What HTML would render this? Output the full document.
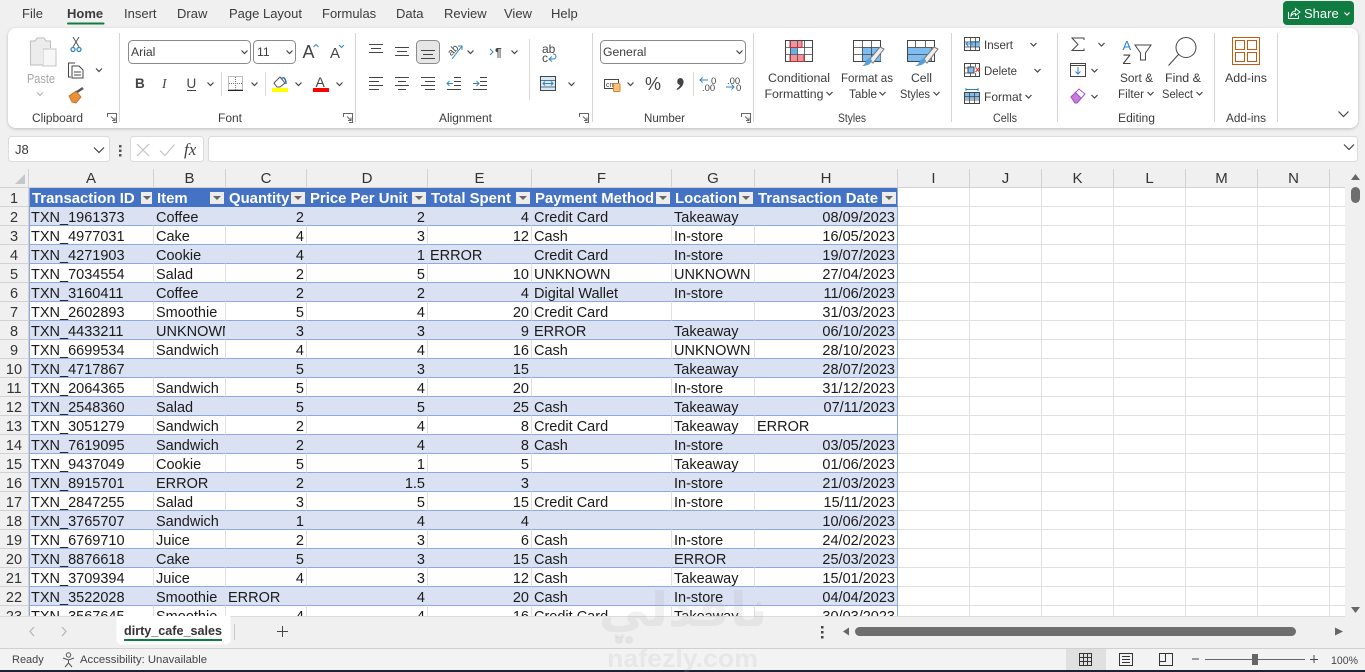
<!DOCTYPE html>
<html><head><meta charset="utf-8"><title>dirty_cafe_sales</title>
<style>
html,body{margin:0;padding:0;width:1365px;height:672px;overflow:hidden;background:#f0f0f0;font-family:"Liberation Sans",Arial,sans-serif}
.abs{position:absolute}
#top{position:absolute;left:0;top:0;z-index:3}
#top text{font-family:"Liberation Sans",Arial,sans-serif;fill:#3b3b3b;font-size:12.2px}
#wrap{position:absolute;left:0;top:169px;width:898px;height:447px;overflow:hidden}
table{border-collapse:separate;border-spacing:0;table-layout:fixed;width:898px;font-size:14.5px;color:#1a1a1a}
th,td{box-sizing:border-box;height:19px;padding:4px 0 0 0;line-height:14px;white-space:nowrap;overflow:hidden;font-weight:400;vertical-align:top}
th{background:#f0f0f0;color:#333;text-align:center;border-right:1px solid #d2d2d2;border-bottom:1px solid #d2d2d2}
tr:first-child th{font-size:15px;padding-top:2px;line-height:16px}
td{padding:4px 2px 0 2px;border-right:1px solid #e0e0e0;border-bottom:1px solid #8ea9db;background:#fff}
tr:nth-child(odd) td{background:#d9e1f2;border-right-color:#d9e1f2}
td:nth-child(4),td:nth-child(5),td:nth-child(6),td:nth-child(9){text-align:right}
td:nth-child(9){border-right-color:#8ea9db!important}
td:nth-child(2){border-left:1px solid #8ea9db;padding-left:1px}
td.l{text-align:left!important}
tr.h td{background:#4472c4!important;color:#fff;font-weight:700;font-size:14.9px;border-right-color:#4472c4;border-bottom-color:#4472c4;position:relative;padding-left:3px;text-align:left!important}
tr.h td:nth-child(2){padding-left:2px}
tr.h td i{position:absolute;right:1px;top:4px;width:14px;height:12px;background:#ececec}
tr.h td:nth-child(2) i{width:11px}
tr.h td i:after{content:"";position:absolute;left:3px;top:4px;border:4px solid transparent;border-top:4px solid #666;border-bottom:0}
tr.h td:nth-child(2) i:after{left:2px}
#rg{position:absolute;left:898px;top:188px;width:447px;height:428px;background-color:#fff;
background-image:linear-gradient(to right,transparent 71px,#e0e0e0 71px,#e0e0e0 72px),linear-gradient(to bottom,transparent 18px,#e0e0e0 18px,#e0e0e0 19px);background-size:72px 100%,100% 19px}
.ch{position:absolute;top:169px;height:19px;box-sizing:border-box;width:72px;background:#f0f0f0;border-right:1px solid #d2d2d2;border-bottom:1px solid #d2d2d2;text-align:center;font-size:15px;padding-top:2px;line-height:16px;color:#333}
#vs{position:absolute;left:1345px;top:169px;width:20px;height:447px;background:#f0f0f0}
#bot{position:absolute;left:0;top:616px;z-index:3}
#bot text{font-family:"Liberation Sans",Arial,sans-serif;fill:#444}
#wm{position:absolute;left:560px;top:590px;z-index:4;pointer-events:none}
</style></head><body>
<svg id="top" width="1365" height="169" viewBox="0 0 1365 169" xmlns="http://www.w3.org/2000/svg">
<defs>
<path id="c" d="M-3-1.5L0 1.5L3-1.5" fill="none" stroke="#444" stroke-width="1.2"/>
<path id="C" d="M-5-2.5L0 2.5L5-2.5" fill="none" stroke="#444" stroke-width="1.2"/>
<path id="dl" d="M-4.500-1V-4.500H4.500V4.500H1M-1-1.500L3 2.500M3-.5V2.500H0" fill="none" stroke="#666" stroke-width="1"/>
<filter id="sh" x="-2%" y="-10%" width="104%" height="125%"><feDropShadow dx="0" dy="1" stdDeviation="1.600" flood-color="#000" flood-opacity=".22"/></filter>
</defs>
<rect width="1365" height="169" fill="#f0f0f0"/>
<text x="22" y="18" style="font-size:13px">File</text>
<text x="67" y="18" style="font-weight:700;font-size:13px">Home</text>
<rect x="67" y="22.500" width="37.500" height="2" rx="1" fill="#107c41"/>
<text x="124" y="18" style="font-size:13px">Insert</text>
<text x="177" y="18" style="font-size:13px">Draw</text>
<text x="229" y="18" style="font-size:13px">Page Layout</text>
<text x="322" y="18" style="font-size:13px">Formulas</text>
<text x="396" y="18" style="font-size:13px">Data</text>
<text x="444" y="18" style="font-size:13px">Review</text>
<text x="504" y="18" style="font-size:13px">View</text>
<text x="551" y="18" style="font-size:13px">Help</text>
<rect x="1283" y="1" width="71" height="24" rx="4" fill="#107c41"/>
<path d="M1288.500 12V18.500H1298.500V15.500M1291 16C1291 12.500 1293.500 11 1295.500 11V8.500L1300 12L1295.500 15.500V13.500C1293.500 13.500 1292 14.500 1291 16Z" fill="none" stroke="#fff" stroke-width=".9"/>
<text x="1304" y="18" style="font-size:13px;fill:#fff">Share</text>
<path d="M1344.500 12.500L1347 15L1349.500 12.500" stroke="#fff" fill="none" stroke-width="1.200"/>

<rect x="8" y="28" width="1350" height="100" rx="8" fill="#fff" filter="url(#sh)"/>
<g stroke="#d4d4d4" stroke-width="1"><path d="M119.500 33V122M355.500 33V122M592.500 33V122M753.500 33V122M951.500 33V122M1057.500 33V122M1214.500 33V122M1277.500 33V122"/><path d="M529.500 39V100M221.500 72V96M265.500 72V96M693.500 72V96" stroke="#d8d8d8"/></g>

<!-- Clipboard -->
<path d="M30.500 64V41H35L37 38H44L46 41H50.500V48" fill="#ececec" stroke="#bdbdbd"/>
<rect x="43" y="49" width="13" height="17" fill="#f7f7f7" stroke="#c4c4c4"/>
<rect x="30.500" y="49" width="12.500" height="15.500" fill="#ececec"/>
<path d="M30.500 41V65H43" fill="none" stroke="#bdbdbd"/>
<text x="27" y="83" textLength="28" lengthAdjust="spacingAndGlyphs" style="font-size:12.500px;fill:#a6a6a6">Paste</text>
<use href="#c" x="40" y="94" opacity=".4"/>
<path d="M73 37L79 47M79 37L73 47" stroke="#555" fill="none"/><circle cx="73" cy="49.500" r="2" fill="none" stroke="#2e86c8" stroke-width="1.300"/><circle cx="79" cy="49.500" r="2" fill="none" stroke="#2e86c8" stroke-width="1.300"/>
<path d="M71 77H68.500V63H75M72 66H79L83 70V78H72Z" fill="#fff" stroke="#444"/><path d="M74 72H81M74 75H81" stroke="#444"/>
<use href="#c" x="99" y="70"/>
<path d="M69 96L76 91L81 97L76 103L72 102Z" fill="#e8913c" stroke="#c46a1c" stroke-width=".8"/><path d="M77 92L83 88" stroke="#555" stroke-width="2.500"/>
<text x="32" y="122" textLength="51" lengthAdjust="spacingAndGlyphs">Clipboard</text><use href="#dl" x="112" y="118"/>

<!-- Font -->
<rect x="128.500" y="40.500" width="122" height="23" rx="4" fill="#fff" stroke="#8a8a8a"/>
<text x="131" y="56">Arial</text><use href="#c" x="244.500" y="52"/>
<rect x="253.500" y="40.500" width="42" height="23" rx="4" fill="#fff" stroke="#8a8a8a"/>
<text x="257" y="56">11</text><use href="#c" x="289.500" y="52"/>
<text x="302.500" y="58" style="font-size:18px;fill:#444">A</text><path d="M313.500 47L316 44.500L318.500 47" stroke="#2e86c8" fill="none"/>
<text x="330" y="58" style="font-size:15px;fill:#444">A</text><path d="M339 45L341.500 47.500L344 45" stroke="#2e86c8" fill="none"/>
<text x="135" y="88" style="font-weight:700;font-size:13.500px;fill:#444">B</text>
<text x="162" y="88" style="font-style:italic;font-size:13.500px;font-family:'Liberation Serif';fill:#444">I</text>
<text x="186.500" y="88" style="font-size:13.500px;fill:#444">U</text><path d="M187 90.500H196" stroke="#444"/>
<use href="#c" x="210.500" y="84"/>
<rect x="228.500" y="76.500" width="14" height="13" fill="none" stroke="#777" stroke-dasharray="1 1"/><path d="M235.500 77V90M229 83.500H242" stroke="#777" stroke-dasharray="1 1"/><path d="M228 90.500H243" stroke="#222"/>
<use href="#c" x="254.500" y="84"/>
<path d="M274 83L280 77L285 83L280 87H277Z" fill="#fff" stroke="#555"/><path d="M281 79C284 76 286 79 286 84" stroke="#2e74b5" fill="none" stroke-width="1.500"/>
<rect x="272" y="88" width="16" height="4" fill="#ffff00"/>
<use href="#c" x="298.500" y="84"/>
<text x="315.500" y="87" style="font-size:14px;fill:#444">A</text><rect x="313" y="88" width="16" height="4" fill="#ff0000"/>
<use href="#c" x="339.500" y="84"/>
<text x="218" y="122" textLength="24" lengthAdjust="spacingAndGlyphs">Font</text><use href="#dl" x="348" y="118"/>

<!-- Alignment -->
<g stroke="#444" stroke-width="1" fill="none">
<path d="M369 44.500H383M371 48.500H381M369 52.500H383"/>
<path d="M395 47.500H409M397 51.500H407M395 55.500H409"/>
</g>
<rect x="416.500" y="40.500" width="23" height="23" rx="4" fill="#e6e6e6" stroke="#8a8a8a"/>
<path d="M421 50.500H435M423 54.500H433M421 58.500H435" stroke="#444"/>
<g stroke="#444" fill="none"><path d="M369 77.500H383M369 81.500H379M369 85.500H383M369 89.500H379"/><path d="M395 77.500H409M398 81.500H406M395 85.500H409M398 89.500H406"/><path d="M421 77.500H435M425 81.500H435M421 85.500H435M425 89.500H435"/>
<path d="M454 77.500H461M454 81.500H461M454 85.500H461M447 89.500H461"/><path d="M480 77.500H487M480 81.500H487M480 85.500H487M473 89.500H487"/></g>
<path d="M447 83.500H453M449.500 81L447 83.500L449.500 86" stroke="#2e86c8" fill="none"/><path d="M473 83.500H479M476.500 81L479 83.500L476.500 86" stroke="#2e86c8" fill="none"/>
<text x="447" y="54" transform="rotate(-45 452 50)" style="font-size:10px;fill:#444">ab</text><path d="M452 59L462 46M458 46H462V50" stroke="#2e86c8" fill="none"/>
<use href="#c" x="470.500" y="52"/>
<path d="M490 49L493 52L490 55" stroke="#2e86c8" fill="none"/><text x="495" y="56.500" style="font-size:12px;font-weight:700;fill:#444">¶</text>
<use href="#c" x="514.500" y="52"/>
<text x="542" y="53" style="font-size:12px;fill:#444">ab</text><text x="542" y="62" style="font-size:12px;fill:#444">c</text><path d="M549 59H553C557 59 557 54 553 54M552 56.500L549 59L552 61.500" stroke="#2e86c8" fill="none"/>
<rect x="540.500" y="76.500" width="15" height="14" fill="#d6ebf7" stroke="#444"/><path d="M540 80.500H556M540 87H556" stroke="#444" stroke-width=".7"/><path d="M543 83.500H553M545 81.500L543 83.500L545 85.500M551 81.500L553 83.500L551 85.500" stroke="#2e86c8" fill="none"/>
<use href="#c" x="571.500" y="84"/>
<text x="439" y="122" textLength="53" lengthAdjust="spacingAndGlyphs">Alignment</text><use href="#dl" x="584" y="118"/>

<!-- Number -->
<rect x="600.500" y="40.500" width="145" height="23" rx="4" fill="#fff" stroke="#8a8a8a"/>
<text x="603" y="56">General</text><use href="#c" x="739.500" y="52"/>
<rect x="604.500" y="79.500" width="14" height="9" fill="#fff" stroke="#444"/><text x="606" y="87" style="font-size:7px;fill:#444">cm</text>
<rect x="613.500" y="83.500" width="6.500" height="8" rx="1" fill="#f7c27b" stroke="#d9822b"/>
<use href="#c" x="630.500" y="84"/>
<text x="645" y="90" style="font-size:18px;fill:#444">%</text>
<path d="M680 78A3.600 3.600 0 0 1 683.600 81.600C683.600 85.500 680.500 88.500 677 90L676.500 89C678.500 87.500 679.800 86 680 85A3.600 3.600 0 0 1 680 78Z" fill="#444"/>
<path d="M700 80H708M702.500 77.500L700 80L702.500 82.500" stroke="#2e86c8" fill="none"/><text x="711" y="84" style="font-size:9.500px;fill:#444">0</text><text x="702" y="91" style="font-size:9.500px;fill:#444">.00</text>
<text x="727" y="84" style="font-size:9.500px;fill:#444">.00</text><path d="M726 87H734M731.500 84.500L734 87L731.500 89.500" stroke="#2e86c8" fill="none"/><text x="736" y="91" style="font-size:9.500px;fill:#444">0</text>
<text x="644" y="122" textLength="41" lengthAdjust="spacingAndGlyphs">Number</text><use href="#dl" x="746" y="118"/>

<!-- Styles -->
<g>
<rect x="785.500" y="40.500" width="27" height="21" fill="#fff" stroke="#444"/>
<rect x="790" y="41" width="12" height="6.500" fill="#f4929b"/><rect x="790" y="48" width="7" height="6.500" fill="#6aaee8"/><rect x="790" y="55" width="14" height="6.500" fill="#f4929b"/>
<path d="M785 47.500H813M785 54.500H813M790.500 40V62M797.500 40V62M804.500 40V62" stroke="#444" stroke-width=".8" fill="none"/>
<path d="M790 41V47.500H802V41M790 55V61.500H804V55" stroke="#c0303a" fill="none"/>
</g>
<text x="768" y="82" textLength="62" lengthAdjust="spacingAndGlyphs">Conditional</text><text x="764.500" y="98" textLength="59" lengthAdjust="spacingAndGlyphs">Formatting</text><use href="#c" x="829.500" y="93.500"/>
<g>
<rect x="853.500" y="40.500" width="27" height="21" fill="#fff" stroke="#444"/>
<rect x="862" y="47" width="18.500" height="14" fill="#7fbdf0"/>
<path d="M853 47.500H881M853 54.500H881M862.500 40V62M871.500 40V62" stroke="#444" stroke-width=".8" fill="none"/>
<path d="M869 60L880 47L884 49L873 63Z" fill="#eee" stroke="#777"/><path d="M862 66C866 66 871 65 872 60L869 58C865 60 866 64 862 66Z" fill="#5a9fd4"/>
</g>
<text x="841" y="82" textLength="52" lengthAdjust="spacingAndGlyphs">Format as</text><text x="849" y="98" textLength="28" lengthAdjust="spacingAndGlyphs">Table</text><use href="#c" x="882.500" y="93.500"/>
<g>
<rect x="907.500" y="40.500" width="27" height="21" fill="#fff" stroke="#444"/>
<rect x="908" y="47" width="23" height="14" fill="#7fbdf0"/>
<path d="M907 47.500H935M907 54.500H935M915.500 40V47M925.500 40V47M931.500 47V62" stroke="#444" stroke-width=".8" fill="none"/>
<path d="M923 60L934 47L938 49L927 63Z" fill="#eee" stroke="#777"/><path d="M915 66C919 66 925 65 926 60L923 58C919 60 920 64 915 66Z" fill="#5a9fd4"/>
</g>
<text x="911" y="82">Cell</text><text x="900" y="98" textLength="30" lengthAdjust="spacingAndGlyphs">Styles</text><use href="#c" x="936.500" y="93.500"/>
<text x="838" y="122" textLength="28" lengthAdjust="spacingAndGlyphs">Styles</text>

<!-- Cells -->
<g fill="none" stroke="#444">
<rect x="964.500" y="37.500" width="15" height="13" fill="#fff"/><rect x="971" y="41" width="9" height="6" fill="#7fbdf0" stroke="none"/><path d="M964 42H980M964 47H980M970.500 37V51M975.500 37V51" stroke-width=".8"/>
<rect x="964.500" y="63.500" width="15" height="13" fill="#fff"/><rect x="968" y="67" width="6" height="6" fill="#7fbdf0"/><path d="M964 68H968M964 73H968M970.500 63V67M970.500 73V77M975.500 63V67M975.500 73V77" stroke-width=".8"/>
<rect x="964.500" y="92.500" width="15" height="11" fill="#fff"/><rect x="965" y="93" width="14" height="6" fill="#7fbdf0" stroke="none"/><path d="M964 96.500H980M964 100H980M969.500 92V104M974.500 92V104" stroke-width=".8"/>
</g>
<path d="M966 44H973M968.500 41.500L966 44L968.500 46.500" stroke="#2e86c8" fill="none"/>
<path d="M975.500 67.500L979.500 72M979.500 67.500L975.500 72" stroke="#e0463c" fill="none" stroke-width="1.200"/>
<path d="M966 89.500H978M966 88V91M978 88V91" stroke="#2e86c8" fill="none"/>
<text x="984" y="49" textLength="29" lengthAdjust="spacingAndGlyphs">Insert</text><use href="#c" x="1033.500" y="44.500"/>
<text x="984" y="75" textLength="33" lengthAdjust="spacingAndGlyphs">Delete</text><use href="#c" x="1037.500" y="70.500"/>
<text x="984" y="101" textLength="38" lengthAdjust="spacingAndGlyphs">Format</text><use href="#c" x="1028.500" y="96.500"/>
<text x="993" y="122" textLength="24" lengthAdjust="spacingAndGlyphs">Cells</text>

<!-- Editing -->
<path d="M1084 40V38H1072L1078 44.500L1072 50.500H1084V48.500" fill="none" stroke="#444"/>
<use href="#c" x="1101.500" y="44.500"/>
<rect x="1070.500" y="63.500" width="15" height="13" fill="#fff" stroke="#444"/><path d="M1071 65.500H1085" stroke="#444"/><path d="M1078 67V74M1075.500 71.500L1078 74L1080.500 71.500" stroke="#2e86c8" fill="none"/>
<use href="#c" x="1094.500" y="70.500"/>
<path d="M1071 97L1079 89L1085 94L1077 103H1075Z" fill="#fff" stroke="#a44fc4"/><path d="M1071 97L1075.500 92.500L1081 98L1077 103H1075Z" fill="#c77ddb" stroke="#a44fc4"/>
<use href="#c" x="1094.500" y="96.500"/>
<text x="1122.500" y="50" style="font-size:13px;fill:#2e86c8">A</text><text x="1122.500" y="64" style="font-size:14px;fill:#444">Z</text>
<path d="M1135 45H1151L1145.500 53V60H1140.500V53Z" fill="#fff" stroke="#444"/>
<text x="1120" y="82" textLength="33" lengthAdjust="spacingAndGlyphs">Sort &amp;</text><text x="1118" y="98" textLength="26" lengthAdjust="spacingAndGlyphs">Filter</text><use href="#c" x="1150.500" y="93.500"/>
<circle cx="1186" cy="47.500" r="10" fill="#fff" stroke="#444"/><path d="M1178.500 54.500L1168.500 65.500" stroke="#444" fill="none"/>
<text x="1165" y="82" textLength="36" lengthAdjust="spacingAndGlyphs">Find &amp;</text><text x="1162" y="98" textLength="31" lengthAdjust="spacingAndGlyphs">Select</text><use href="#c" x="1199.500" y="93.500"/>
<text x="1118" y="122" textLength="37" lengthAdjust="spacingAndGlyphs">Editing</text>

<!-- Add-ins -->
<rect x="1232.500" y="37.500" width="27" height="27" fill="#fff" stroke="#c55a11"/>
<rect x="1235.500" y="40.500" width="9" height="9" fill="none" stroke="#c55a11"/><rect x="1247.500" y="40.500" width="9" height="9" fill="none" stroke="#c55a11"/><rect x="1235.500" y="52.500" width="9" height="9" fill="none" stroke="#c55a11"/><rect x="1247.500" y="52.500" width="9" height="9" fill="none" stroke="#c55a11"/>
<text x="1225" y="82" textLength="42" lengthAdjust="spacingAndGlyphs">Add-ins</text>
<text x="1226" y="122" textLength="40" lengthAdjust="spacingAndGlyphs">Add-ins</text>
<use href="#C" x="1343.500" y="114"/>

<!-- Formula bar -->
<rect x="8.500" y="136.500" width="101" height="25" rx="3" fill="#fff" stroke="#dcdcdc"/>
<text x="15" y="154" style="font-size:13px">J8</text><use href="#C" x="99" y="150"/>
<g fill="#555"><rect x="119" y="145" width="2.500" height="2.500"/><rect x="119" y="149.500" width="2.500" height="2.500"/><rect x="119" y="154" width="2.500" height="2.500"/></g>
<rect x="130.500" y="136.500" width="73" height="25" rx="3" fill="#fff" stroke="#dcdcdc"/>
<path d="M137 144L149 156M149 144L137 156" stroke="#c4c4c4" fill="none" stroke-width="1.200"/>
<path d="M160 150.500L165 155.500L174.500 144.500" stroke="#c4c4c4" fill="none" stroke-width="1.200"/>
<text x="184" y="155" style="font-family:'Liberation Serif';font-style:italic;font-size:17px;fill:#444">fx</text>
<rect x="208.500" y="136.500" width="1149" height="25" rx="3" fill="#fff" stroke="#dcdcdc"/>
<use href="#C" x="1349" y="147"/>
</svg>

<div id="rg"></div>
<div class="ch" style="left:898px">I</div><div class="ch" style="left:970px">J</div><div class="ch" style="left:1042px">K</div><div class="ch" style="left:1114px">L</div><div class="ch" style="left:1186px">M</div><div class="ch" style="left:1258px">N</div><div class="ch" style="left:1330px;width:15px;border-right:0"></div>

<div id="wrap"><table>
<colgroup><col style="width:29px"><col style="width:125px"><col style="width:72px"><col style="width:81px"><col style="width:121px"><col style="width:104px"><col style="width:140px"><col style="width:83px"><col style="width:143px"></colgroup>
<tr><th></th><th>A</th><th>B</th><th>C</th><th>D</th><th>E</th><th>F</th><th>G</th><th>H</th></tr>
<tr class="h"><th>1</th><td>Transaction ID<i></i></td><td>Item<i></i></td><td>Quantity<i></i></td><td>Price Per Unit<i></i></td><td>Total Spent<i></i></td><td>Payment Method<i></i></td><td>Location<i></i></td><td>Transaction Date<i></i></td></tr>
<tr><th>2</th><td>TXN_1961373</td><td>Coffee</td><td>2</td><td>2</td><td>4</td><td>Credit Card</td><td>Takeaway</td><td>08/09/2023</td></tr>
<tr><th>3</th><td>TXN_4977031</td><td>Cake</td><td>4</td><td>3</td><td>12</td><td>Cash</td><td>In-store</td><td>16/05/2023</td></tr>
<tr><th>4</th><td>TXN_4271903</td><td>Cookie</td><td>4</td><td>1</td><td class="l">ERROR</td><td>Credit Card</td><td>In-store</td><td>19/07/2023</td></tr>
<tr><th>5</th><td>TXN_7034554</td><td>Salad</td><td>2</td><td>5</td><td>10</td><td>UNKNOWN</td><td>UNKNOWN</td><td>27/04/2023</td></tr>
<tr><th>6</th><td>TXN_3160411</td><td>Coffee</td><td>2</td><td>2</td><td>4</td><td>Digital Wallet</td><td>In-store</td><td>11/06/2023</td></tr>
<tr><th>7</th><td>TXN_2602893</td><td>Smoothie</td><td>5</td><td>4</td><td>20</td><td>Credit Card</td><td></td><td>31/03/2023</td></tr>
<tr><th>8</th><td>TXN_4433211</td><td>UNKNOWN</td><td>3</td><td>3</td><td>9</td><td>ERROR</td><td>Takeaway</td><td>06/10/2023</td></tr>
<tr><th>9</th><td>TXN_6699534</td><td>Sandwich</td><td>4</td><td>4</td><td>16</td><td>Cash</td><td>UNKNOWN</td><td>28/10/2023</td></tr>
<tr><th>10</th><td>TXN_4717867</td><td></td><td>5</td><td>3</td><td>15</td><td></td><td>Takeaway</td><td>28/07/2023</td></tr>
<tr><th>11</th><td>TXN_2064365</td><td>Sandwich</td><td>5</td><td>4</td><td>20</td><td></td><td>In-store</td><td>31/12/2023</td></tr>
<tr><th>12</th><td>TXN_2548360</td><td>Salad</td><td>5</td><td>5</td><td>25</td><td>Cash</td><td>Takeaway</td><td>07/11/2023</td></tr>
<tr><th>13</th><td>TXN_3051279</td><td>Sandwich</td><td>2</td><td>4</td><td>8</td><td>Credit Card</td><td>Takeaway</td><td class="l">ERROR</td></tr>
<tr><th>14</th><td>TXN_7619095</td><td>Sandwich</td><td>2</td><td>4</td><td>8</td><td>Cash</td><td>In-store</td><td>03/05/2023</td></tr>
<tr><th>15</th><td>TXN_9437049</td><td>Cookie</td><td>5</td><td>1</td><td>5</td><td></td><td>Takeaway</td><td>01/06/2023</td></tr>
<tr><th>16</th><td>TXN_8915701</td><td>ERROR</td><td>2</td><td>1.5</td><td>3</td><td></td><td>In-store</td><td>21/03/2023</td></tr>
<tr><th>17</th><td>TXN_2847255</td><td>Salad</td><td>3</td><td>5</td><td>15</td><td>Credit Card</td><td>In-store</td><td>15/11/2023</td></tr>
<tr><th>18</th><td>TXN_3765707</td><td>Sandwich</td><td>1</td><td>4</td><td>4</td><td></td><td></td><td>10/06/2023</td></tr>
<tr><th>19</th><td>TXN_6769710</td><td>Juice</td><td>2</td><td>3</td><td>6</td><td>Cash</td><td>In-store</td><td>24/02/2023</td></tr>
<tr><th>20</th><td>TXN_8876618</td><td>Cake</td><td>5</td><td>3</td><td>15</td><td>Cash</td><td>ERROR</td><td>25/03/2023</td></tr>
<tr><th>21</th><td>TXN_3709394</td><td>Juice</td><td>4</td><td>3</td><td>12</td><td>Cash</td><td>Takeaway</td><td>15/01/2023</td></tr>
<tr><th>22</th><td>TXN_3522028</td><td>Smoothie</td><td class="l">ERROR</td><td>4</td><td>20</td><td>Cash</td><td>In-store</td><td>04/04/2023</td></tr>
<tr><th>23</th><td>TXN_3567645</td><td>Smoothie</td><td>4</td><td>4</td><td>16</td><td>Credit Card</td><td>Takeaway</td><td>30/03/2023</td></tr>
</table></div>
<svg class="abs" style="left:0;top:169px;z-index:2" width="30" height="19"><path d="M25 5V15H15Z" fill="#c6c6c6"/></svg>

<div id="vs"><svg width="20" height="447" style="display:block"><path d="M6 11L10.500 5L15 11Z" fill="#666"/><rect x="6" y="18" width="9" height="16" rx="4.500" fill="#6e6e6e"/><path d="M6 438L10.500 444L15 438Z" fill="#666"/></svg></div>

<svg id="bot" width="1365" height="56" viewBox="0 616 1365 56" xmlns="http://www.w3.org/2000/svg">
<rect x="0" y="616" width="1365" height="32" fill="#f0f0f0"/>
<rect x="0" y="648" width="1365" height="22" fill="#f3f3f3"/>
<path d="M0 648.500H1365" stroke="#d0d0d0"/><path d="M0 616.500H1345" stroke="#dcdcdc"/>
<path d="M34 627L30 631.500L34 636" fill="none" stroke="#b5b5b5" stroke-width="1.200"/><path d="M62 627L66 631.500L62 636" fill="none" stroke="#b5b5b5" stroke-width="1.200"/>
<rect x="116.500" y="612" width="114" height="32.500" rx="5" fill="#fff"/>
<text x="124" y="635" textLength="98" lengthAdjust="spacingAndGlyphs" style="font-weight:700;font-size:13px;fill:#333">dirty_cafe_sales</text>
<rect x="124" y="639" width="98" height="2" fill="#107c41"/>
<path d="M234.500 624V640" stroke="#c8c8c8"/>
<path d="M277 631.500H288M282.500 626V637" stroke="#444" fill="none"/>
<g fill="#444"><rect x="821" y="626" width="2.500" height="2.500"/><rect x="821" y="631" width="2.500" height="2.500"/><rect x="821" y="636" width="2.500" height="2.500"/></g>
<path d="M849 627.500L843 631.500L849 635.500Z" fill="#666"/>
<rect x="855" y="627" width="441" height="9" rx="4.500" fill="#6e6e6e"/>
<path d="M1335 627.500L1343 631.500L1335 635.500Z" fill="#666"/>

<text x="12" y="663" style="font-size:11px">Ready</text>
<circle cx="68.500" cy="655" r="2.200" fill="none" stroke="#555"/><path d="M63 658L68.500 660L74 658M68.500 660V663L65 667M68.500 663L72 667" fill="none" stroke="#555"/>
<text x="80" y="663" textLength="127" lengthAdjust="spacingAndGlyphs" style="font-size:11px">Accessibility: Unavailable</text>
<rect x="1066" y="649" width="40" height="21" fill="#e0e0e0"/>
<path d="M1079.500 653.500H1091.500V665.500H1079.500ZM1083.500 653.500V665.500M1087.500 653.500V665.500M1079.500 657.500H1091.500M1079.500 661.500H1091.500" fill="none" stroke="#333"/>
<rect x="1119.500" y="653.500" width="13" height="12" fill="none" stroke="#333"/><path d="M1122 656.500H1130M1122 659.500H1130M1122 662.500H1130" stroke="#333"/>
<path d="M1159.500 653.500H1172.500V665.500H1159.500ZM1159.500 661.500H1165.500V653.500" fill="none" stroke="#333"/>
<path d="M1192 659H1199" stroke="#444"/>
<path d="M1205 659.500H1305" stroke="#666"/><rect x="1252" y="654" width="6" height="11" fill="#666"/>
<path d="M1310 659.500H1318M1314 655V663" stroke="#444"/>
<text x="1331" y="664" textLength="27" lengthAdjust="spacingAndGlyphs" style="font-size:11px">100%</text>
<rect x="0" y="670" width="1365" height="2" fill="#1b2233"/>
</svg>

<svg id="wm" width="220" height="82" viewBox="560 590 220 82" xmlns="http://www.w3.org/2000/svg">
<text x="683" y="626" text-anchor="middle" style="font-family:'DejaVu Sans',sans-serif;font-size:50px;font-weight:700;fill:#aaa" opacity=".16">نافذلي</text>
<circle cx="619" cy="640" r="4" fill="#aaa" opacity=".2"/><circle cx="629" cy="640" r="4" fill="#aaa" opacity=".2"/>
<text x="607" y="667" textLength="151" lengthAdjust="spacingAndGlyphs" style="font-family:'Liberation Sans',sans-serif;font-size:25px;font-weight:700;fill:#aaa" opacity=".16">nafezly.com</text>
</svg>
</body></html>
